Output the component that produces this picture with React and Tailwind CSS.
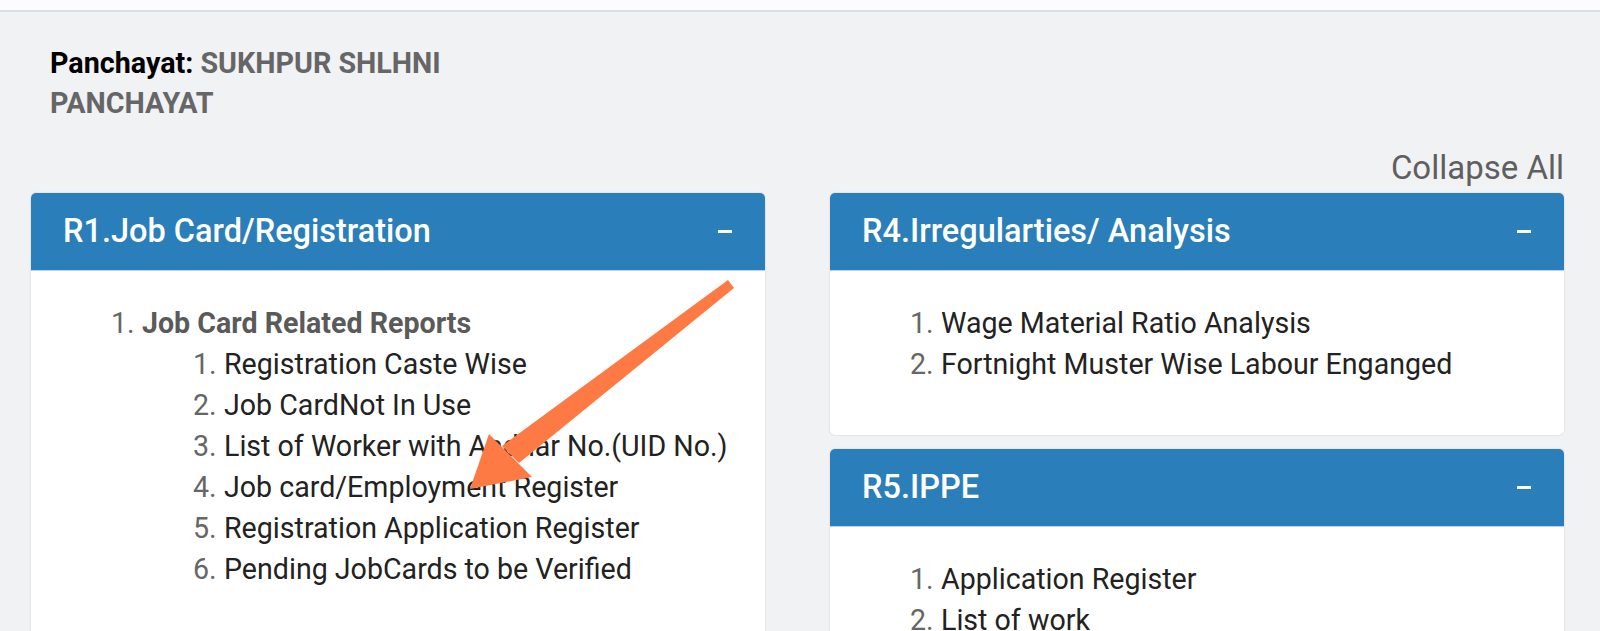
import React from 'react';

const font = { fontFamily: 'Roboto, "Noto Sans", sans-serif' };

const Minus = () => <span className="block w-[14px] h-[3px] bg-white mr-[33px]" />;

const Card = ({ title, children }) => (
  <div className="bg-white rounded-[5px] shadow-[0_0_2px_rgba(0,0,0,0.18)] overflow-hidden">
    <div className="h-[78px] bg-[#2a7eb9] flex items-center justify-between pl-[32px] border-b border-[#b9d3e6]">
      <h2 className="text-[32.5px] font-medium text-white">{title}</h2>
      <Minus />
    </div>
    {children}
  </div>
);

const Item = ({ n, children, bold }) => (
  <li className="flex h-[41px] items-center">
    <span className="text-[#666] w-[31px]">{n}.</span>
    <span className={bold ? 'font-bold text-[#5a5a5a]' : 'text-[#222]'}>{children}</span>
  </li>
);

const App = () => {
  return (
    <div className="relative w-[1600px] h-[631px] overflow-hidden bg-[#f1f2f4]" style={font}>
      <div className="h-[12px] bg-[#fcfcfe] border-b-2 border-[#dcdde0]" />

      <div className="pl-[50px] pt-[31px] text-[28.7px] leading-[40px]">
        <p>
          <span className="font-bold text-black">Panchayat:</span>{' '}
          <span className="font-bold text-[#666]">SUKHPUR SHLHNI</span>
        </p>
        <p className="font-bold text-[#666]">PANCHAYAT</p>
      </div>

      <div className="pl-[31px] pr-[36px]">
        <div className="text-right text-[33px] text-[#5f5f5f] leading-[34px] mt-[28px] mb-[8px]">Collapse All</div>

        <div className="grid grid-cols-2 gap-[65px] items-start">
          <Card title="R1.Job Card/Registration">
            <ul className="pt-[32px] pl-[80px] text-[28.6px] h-[400px]">
              <Item n={1} bold>Job Card Related Reports</Item>
              <li>
                <ul className="pl-[82px]">
                  <Item n={1}>Registration Caste Wise</Item>
                  <Item n={2}>Job CardNot In Use</Item>
                  <Item n={3}>List of Worker with Aadhar No.(UID No.)</Item>
                  <Item n={4}>Job card/Employment Register</Item>
                  <Item n={5}>Registration Application Register</Item>
                  <Item n={6}>Pending JobCards to be Verified</Item>
                </ul>
              </li>
            </ul>
          </Card>

          <div className="flex flex-col gap-[14px]">
            <Card title="R4.Irregularties/ Analysis">
              <ul className="pt-[32px] pl-[80px] pb-[50px] text-[28.6px]">
                <Item n={1}>Wage Material Ratio Analysis</Item>
                <Item n={2}>Fortnight Muster Wise Labour Enganged</Item>
              </ul>
            </Card>
            <Card title="R5.IPPE">
              <ul className="pt-[32px] pl-[80px] pb-[40px] text-[28.6px]">
                <Item n={1}>Application Register</Item>
                <Item n={2}>List of work</Item>
              </ul>
            </Card>
          </div>
        </div>
      </div>

      {/* annotation arrow */}
      <svg className="absolute left-0 top-0 pointer-events-none" width="1600" height="631">
        <path d="M728 280 L734 288 L519 463 L502 446 Z" fill="#fd7a45" />
        <path d="M470 489 L489 434 L532 477 Z" fill="#fd7a45" />
      </svg>
    </div>
  );
};

export default App;
